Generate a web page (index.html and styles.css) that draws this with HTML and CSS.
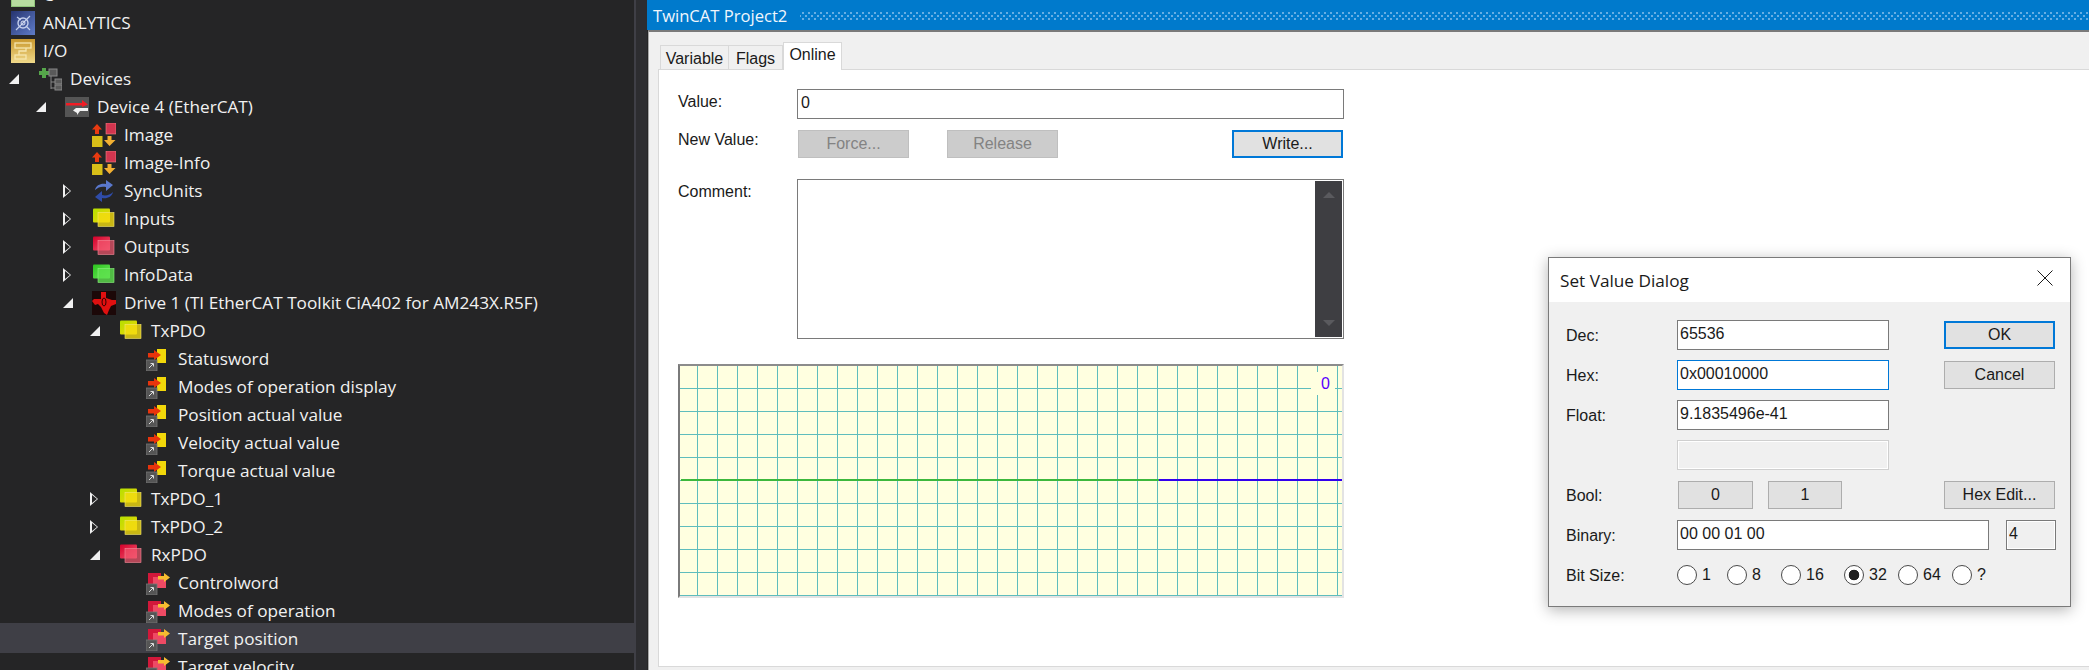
FILE: index.html
```html
<!DOCTYPE html>
<html>
<head>
<meta charset="utf-8">
<title>TwinCAT Project2</title>
<link rel="stylesheet" href="styles.css">
</head>
<body>

<svg class="defs" width="0" height="0">
<defs>
<linearGradient id="blue" x1="0" y1="0" x2="1" y2="1"><stop offset="0" stop-color="#26346f"/><stop offset="1" stop-color="#5f7cc8"/></linearGradient>
<linearGradient id="gold" x1="0" y1="0" x2="0" y2="1"><stop offset="0" stop-color="#c9982e"/><stop offset="1" stop-color="#f0d98a"/></linearGradient>
<linearGradient id="yel" x1="0" y1="0" x2="1" y2="1"><stop offset="0" stop-color="#b4e000"/><stop offset="1" stop-color="#f2d408"/></linearGradient>
<linearGradient id="red" x1="0" y1="0" x2="1" y2="1"><stop offset="0" stop-color="#d4002a"/><stop offset="1" stop-color="#f0566e"/></linearGradient>
<linearGradient id="grn" x1="0" y1="0" x2="1" y2="1"><stop offset="0" stop-color="#2cc41e"/><stop offset="1" stop-color="#6be85c"/></linearGradient>

<symbol id="i-cpp" viewBox="0 0 24 24"><rect x="0" y="0" width="24" height="24" fill="#8fc47a"/><rect x="1" y="1" width="22" height="22" fill="#b7dca0"/></symbol>
<symbol id="i-analytics" viewBox="0 0 24 24">
<rect width="24" height="24" fill="url(#blue)"/>
<circle cx="12" cy="12" r="5" fill="none" stroke="#c4cfec" stroke-width="1.4"/>
<path d="M5 19 L19 5 M6 6 L10 9 M15 15 L19 19" stroke="#c4cfec" stroke-width="1.2" fill="none"/>
<circle cx="12" cy="12" r="2" fill="none" stroke="#dfe5f6"/>
</symbol>
<symbol id="i-io" viewBox="0 0 24 24">
<rect width="24" height="24" fill="url(#gold)"/>
<rect x="4" y="4" width="16" height="5" fill="none" stroke="#f6e6ae" stroke-width="1.3"/>
<path d="M15 9 V12 H8 V16" fill="none" stroke="#f6e6ae" stroke-width="1.3"/>
<rect x="4" y="16" width="11" height="4" fill="none" stroke="#f6e6ae" stroke-width="1.3"/>
</symbol>
<symbol id="i-devices" viewBox="0 0 24 24">
<path d="M1 4 H4 V1 H8 V4 H11 V8 H8 V11 H4 V8 H1 Z" fill="#55a64a"/>
<rect x="11" y="2" width="8" height="7" fill="#5a5a5a" stroke="#888"/>
<path d="M13 9 V22 M13 15 H17 M13 21 H17" stroke="#888" fill="none"/>
<rect x="17" y="12" width="7" height="5" fill="#5a5a5a" stroke="#888"/>
<rect x="17" y="18" width="7" height="5" fill="#5a5a5a" stroke="#888"/>
</symbol>
<symbol id="i-device" viewBox="0 0 24 24">
<rect y="2" width="24" height="20" fill="#555"/>
<path d="M1 8 H17 V5 L23 9.500 L17 12 V10.500 H1 Z" fill="#f01c24"/>
<path d="M23 13 H11 L8 15.500 L12 18 V20 L15 16 H23 Z" fill="#f2f2f2"/>
</symbol>
<symbol id="i-image" viewBox="0 0 24 24">
<rect x="14" y="0" width="10" height="11" fill="#d2354f" stroke="#e88" stroke-width=".6"/>
<path d="M5 1 L10 6.500 H7 V11 H3 V6.500 H0 Z" fill="#e83a10"/>
<rect x="0" y="13" width="10.500" height="11" fill="#d8bf18"/>
<path d="M15.500 13 H19.500 V17 H23.500 L17.500 23 L12 17 H15.500 Z" fill="#f2b032"/>
</symbol>
<symbol id="i-sync" viewBox="0 0 24 24">
<path d="M3 11 C4 6 9 4 14 5 L14 1 L21 6 L14 12 L14 8 C10 7 6 8 3 11 Z" fill="#5a78cc"/>
<path d="M21 13 C20 18 15 20 10 19 L10 23 L3 18 L10 12 L10 16 C14 17 18 16 21 13 Z" fill="#2f4ca8"/>
</symbol>
<symbol id="i-in" viewBox="0 0 24 24"><rect x="1" y="1.500" width="17" height="14" rx="1" fill="url(#yel)"/><rect x="6" y="5.500" width="16" height="14" fill="#f2dc10" fill-opacity=".8" stroke="#f6e870" stroke-width=".6"/></symbol>
<symbol id="i-out" viewBox="0 0 24 24"><rect x="1" y="1.500" width="17" height="14" rx="1" fill="url(#red)"/><rect x="6" y="5.500" width="16" height="14" fill="#f2566e" fill-opacity=".7" stroke="#f58a9a" stroke-width=".6"/></symbol>
<symbol id="i-info" viewBox="0 0 24 24"><rect x="1" y="1.500" width="17" height="14" rx="1" fill="url(#grn)"/><rect x="6" y="5.500" width="16" height="14" fill="#5ce04c" fill-opacity=".8" stroke="#8cf080" stroke-width=".6"/></symbol>
<symbol id="i-ti" viewBox="0 0 24 24">
<rect width="24" height="24" fill="#1c0808"/>
<path d="M9 1 H14 V7 L20 9 L24 9 V13 L19 15 L17 19 L15 24 L12 22 L9 16 L6 13 L3 14 L0 10 L2 8 H9 Z" fill="#e01010"/>
<ellipse cx="12" cy="11" rx="2" ry="4" fill="none" stroke="#300" stroke-width="1"/>
</symbol>
<symbol id="i-tx" viewBox="0 0 24 24">
<rect x="11" y="2" width="9" height="14" fill="#f2d80a"/>
<path d="M2 6 H8 V3 L15 8 L8 13 V10.500 H2 Z" fill="#e8340c"/>
<rect x="0" y="13" width="11" height="11" fill="#555" stroke="#777" stroke-width=".8"/>
<path d="M3 21 L7 17 M4.500 16.500 H7.500 V19.500" stroke="#ddd" fill="none"/>
</symbol>
<symbol id="i-rx" viewBox="0 0 24 24">
<rect x="2" y="2" width="13" height="11" fill="#d2183a"/>
<rect x="7" y="6" width="13" height="11" fill="#ee4a64"/>
<path d="M12 5 H18 V2 L24 6.500 L18 11 V8.500 H12 Z" fill="#f6bc30"/>
<rect x="0" y="13" width="11" height="11" fill="#555" stroke="#777" stroke-width=".8"/>
<path d="M3 21 L7 17 M4.500 16.500 H7.500 V19.500" stroke="#ddd" fill="none"/>
</symbol>
</defs>
</svg>

<div class="tree">
<div class="tree-list">
<div class="row lv0"><svg class="ico"><use href="#i-cpp"/></svg><span>C++</span></div>
<div class="row lv0"><svg class="ico"><use href="#i-analytics"/></svg><span>ANALYTICS</span></div>
<div class="row lv0"><svg class="ico"><use href="#i-io"/></svg><span>I/O</span></div>
<div class="row lv1"><i class="exp open"></i><svg class="ico"><use href="#i-devices"/></svg><span>Devices</span></div>
<div class="row lv2"><i class="exp open"></i><svg class="ico"><use href="#i-device"/></svg><span>Device 4 (EtherCAT)</span></div>
<div class="row lv3"><i class="exp"></i><svg class="ico"><use href="#i-image"/></svg><span>Image</span></div>
<div class="row lv3"><i class="exp"></i><svg class="ico"><use href="#i-image"/></svg><span>Image-Info</span></div>
<div class="row lv3"><i class="exp shut"></i><svg class="ico"><use href="#i-sync"/></svg><span>SyncUnits</span></div>
<div class="row lv3"><i class="exp shut"></i><svg class="ico"><use href="#i-in"/></svg><span>Inputs</span></div>
<div class="row lv3"><i class="exp shut"></i><svg class="ico"><use href="#i-out"/></svg><span>Outputs</span></div>
<div class="row lv3"><i class="exp shut"></i><svg class="ico"><use href="#i-info"/></svg><span>InfoData</span></div>
<div class="row lv3"><i class="exp open"></i><svg class="ico"><use href="#i-ti"/></svg><span>Drive 1 (TI EtherCAT Toolkit CiA402 for AM243X.R5F)</span></div>
<div class="row lv4"><i class="exp open"></i><svg class="ico"><use href="#i-in"/></svg><span>TxPDO</span></div>
<div class="row lv5"><i class="exp"></i><svg class="ico"><use href="#i-tx"/></svg><span>Statusword</span></div>
<div class="row lv5"><i class="exp"></i><svg class="ico"><use href="#i-tx"/></svg><span>Modes of operation display</span></div>
<div class="row lv5"><i class="exp"></i><svg class="ico"><use href="#i-tx"/></svg><span>Position actual value</span></div>
<div class="row lv5"><i class="exp"></i><svg class="ico"><use href="#i-tx"/></svg><span>Velocity actual value</span></div>
<div class="row lv5"><i class="exp"></i><svg class="ico"><use href="#i-tx"/></svg><span>Torque actual value</span></div>
<div class="row lv4"><i class="exp shut"></i><svg class="ico"><use href="#i-in"/></svg><span>TxPDO_1</span></div>
<div class="row lv4"><i class="exp shut"></i><svg class="ico"><use href="#i-in"/></svg><span>TxPDO_2</span></div>
<div class="row lv4"><i class="exp open"></i><svg class="ico"><use href="#i-out"/></svg><span>RxPDO</span></div>
<div class="row lv5"><i class="exp"></i><svg class="ico"><use href="#i-rx"/></svg><span>Controlword</span></div>
<div class="row lv5"><i class="exp"></i><svg class="ico"><use href="#i-rx"/></svg><span>Modes of operation</span></div>
<div class="row lv5 selected"><i class="exp"></i><svg class="ico"><use href="#i-rx"/></svg><span>Target position</span></div>
<div class="row lv5"><i class="exp"></i><svg class="ico"><use href="#i-rx"/></svg><span>Target velocity</span></div>
</div>
</div>

<div class="splitter"></div>

<div class="main">
<div class="titlebar">
<span class="title">TwinCAT Project2</span>
<div class="grip"></div>
</div>

<div class="pane">
<div class="tabs">
<div class="tab tab-variable">Variable</div>
<div class="tab tab-flags">Flags</div>
<div class="tab active">Online</div>
</div>

<div class="tab-body">
<div class="form-row row-value">
<label class="lbl">Value:</label>
<input class="field value-field" type="text" value="0">
</div>
<div class="form-row row-new">
<label class="lbl">New Value:</label>
<div class="btn-row">
<button class="btn off">Force...</button>
<button class="btn off">Release</button>
<button class="btn focus write">Write...</button>
</div>
</div>
<div class="form-row row-comment">
<label class="lbl">Comment:</label>
<div class="comment-box">
<div class="vscroll"><b class="up"></b><b class="down"></b></div>
</div>
</div>
<div class="graph">
<svg class="trace" width="662" height="230">
<line x1="1" y1="114" x2="479" y2="114" stroke="#3cb83c" stroke-width="2"/>
<line x1="479" y1="114" x2="664" y2="114" stroke="#3300ee" stroke-width="2"/>
</svg>
<div class="graph-val">0</div>
</div>
</div>
</div>
</div>

<div class="dialog">
<div class="dlg-title">
<span>Set Value Dialog</span>
<svg class="dlg-close" width="16" height="16"><path d="M0.500 0.500 L15.500 15.500 M15.500 0.500 L0.500 15.500" stroke="#1a1a1a" fill="none"/></svg>
</div>
<div class="dlg-body">
<div class="drow">
<label class="dlbl">Dec:</label>
<input class="dfield" type="text" value="65536">
<button class="btn dbtn focus">OK</button>
</div>
<div class="drow">
<label class="dlbl">Hex:</label>
<input class="dfield hot" type="text" value="0x00010000">
<button class="btn dbtn">Cancel</button>
</div>
<div class="drow">
<label class="dlbl">Float:</label>
<input class="dfield" type="text" value="9.1835496e-41">
</div>
<div class="drow">
<label class="dlbl"></label>
<input class="dfield blank" type="text" disabled>
</div>
<div class="drow">
<label class="dlbl">Bool:</label>
<button class="btn bool bool-0">0</button>
<button class="btn bool bool-1">1</button>
<button class="btn dbtn">Hex Edit...</button>
</div>
<div class="drow">
<label class="dlbl">Binary:</label>
<input class="dfield wide" type="text" value="00 00 01 00">
<input class="dfield size" type="text" value="4" readonly>
</div>
<div class="drow">
<label class="dlbl">Bit Size:</label>
<label class="radio r50"><input type="radio" name="bits">1</label>
<label class="radio r54"><input type="radio" name="bits">8</label>
<label class="radio r63"><input type="radio" name="bits">16</label>
<label class="radio r54"><input type="radio" name="bits" checked>32</label>
<label class="radio r54"><input type="radio" name="bits">64</label>
<label class="radio"><input type="radio" name="bits">?</label>
</div>
</div>
</div>

</body>
</html>
```

FILE: styles.css
```css
html, body {
  margin: 0;
  height: 670px;
  overflow: hidden;
}
body {
  display: flex;
  background: #252526;
  font-family: "Liberation Sans", Arial, sans-serif;
  font-size: 16px;
  color: #1a1a1a;
}
.defs {
  position: absolute;
}

/* solution tree */
.tree {
  width: 634px;
  flex: none;
  overflow: hidden;
  color: #f1f1f1;
  font-family: "Open Sans", sans-serif;
  font-size: 17.200px;
}
.tree-list {
  margin-top: -19px;
}
.row {
  display: flex;
  align-items: center;
  height: 28px;
  white-space: nowrap;
}
.row span {
  margin: 0 0 2px 8px;
}
.ico {
  width: 24px;
  height: 24px;
  flex: none;
}
.lv0 { padding-left: 11px; }
.lv1 { padding-left: 9px; }
.lv2 { padding-left: 36px; }
.lv3 { padding-left: 63px; }
.lv4 { padding-left: 90px; }
.lv5 { padding-left: 117px; }
.selected {
  height: 30px;
  box-sizing: border-box;
  padding-top: 2px;
  margin: -2px 0 0;
  background: #3f3f46;
}
.exp {
  width: 29px;
  height: 14px;
  flex: none;
  position: relative;
}
.exp.open::before {
  content: "";
  position: absolute;
  left: 0;
  top: 2px;
  border-style: solid;
  border-width: 0 0 10px 10px;
  border-color: transparent transparent #f1f1f1 transparent;
}
.exp.shut::before {
  content: "";
  position: absolute;
  left: 0;
  top: 0;
  border-style: solid;
  border-width: 7px 0 7px 8px;
  border-color: transparent transparent transparent #f1f1f1;
}
.exp.shut::after {
  content: "";
  position: absolute;
  left: 1.500px;
  top: 2.500px;
  border-style: solid;
  border-width: 4.500px 0 4.500px 5px;
  border-color: transparent transparent transparent #252526;
}

.splitter {
  width: 13px;
  box-sizing: border-box;
  flex: none;
  background: #2d2d30;
  border-left: 2px solid #3f3f46;
}
.main {
  flex: 1;
  display: flex;
  flex-direction: column;
  min-width: 0;
}

/* title bar */
.titlebar {
  height: 30px;
  flex: none;
  display: flex;
  align-items: center;
  padding-left: 6px;
  background: #007acc;
}
.title {
  color: #f0f6fc;
  font-family: "Open Sans", sans-serif;
  font-size: 16.600px;
  white-space: nowrap;
}
.grip {
  flex: 1;
  height: 9px;
  margin-left: 13px;
  background-image:
    radial-gradient(circle, #66aee4 1px, transparent 1.300px),
    radial-gradient(circle, #66aee4 1px, transparent 1.300px);
  background-size: 6px 6px;
  background-position: 0 -1px, 3px 2px;
}

/* pane with tabs */
.pane {
  flex: 1;
  display: flex;
  flex-direction: column;
  margin-left: 1px;
  background: #f0f0f0;
  border-top: 2px solid #7a7a7a;
  border-left: 1px solid #a8a8a8;
  padding: 10px 0 3px 9px;
  min-height: 0;
}
.tabs {
  display: flex;
  align-items: flex-end;
  height: 28px;
  flex: none;
  margin-bottom: -1px;
  padding-left: 2px;
}
.tab {
  height: 25px;
  line-height: 25px;
  text-align: center;
  border: 1px solid #d9d9d9;
  border-bottom: 0;
  box-sizing: border-box;
}
.tab-variable {
  width: 69px;
}
.tab-flags {
  width: 54px;
  border-left: 0;
}
.tab.active {
  width: 59px;
  height: 28px;
  line-height: 24px;
  background: #fff;
  position: relative;
  z-index: 1;
}
.tab-body {
  flex: 1;
  background: #fff;
  border: 1px solid #d9d9d9;
  border-right: 0;
  padding: 19px 0 0 19px;
}

/* form */
.form-row {
  display: flex;
}
.row-value {
  height: 30px;
  margin-bottom: 11px;
}
.row-new {
  height: 28px;
  margin-bottom: 21px;
}
.row-comment {
  height: 160px;
  margin-bottom: 25px;
}
.lbl {
  width: 119px;
  flex: none;
}
.row-value .lbl {
  line-height: 26px;
}
.row-new .lbl {
  line-height: 19px;
}
.row-comment .lbl {
  line-height: 25px;
}
.field {
  width: 547px;
  box-sizing: border-box;
  height: 30px;
  border: 1px solid #7a7a7a;
  padding: 0 3px 3px;
  font: inherit;
  color: #1a1a1a;
  outline: none;
}
.btn-row {
  display: flex;
  width: 545px;
  margin-left: 1px;
  gap: 38px;
}
.btn {
  box-sizing: border-box;
  width: 111px;
  height: 28px;
  padding: 0;
  background: #e1e1e1;
  border: 1px solid #adadad;
  font: inherit;
  color: #1a1a1a;
}
.btn.off {
  background: #ccc;
  border-color: #bfbfbf;
  color: #838383;
}
.btn.focus {
  border: 2px solid #0078d7;
}
.write {
  margin-left: auto;
}
.comment-box {
  width: 547px;
  box-sizing: border-box;
  border: 1px solid #7a7a7a;
  padding: 1px;
  display: flex;
  justify-content: flex-end;
}
.vscroll {
  width: 27px;
  background: #3e3e42;
  display: flex;
  flex-direction: column;
  justify-content: space-between;
  align-items: center;
  padding: 11px 0;
}
.up, .down {
  width: 0;
  height: 0;
  border-left: 6px solid transparent;
  border-right: 6px solid transparent;
}
.up {
  border-bottom: 6px solid #5a5a5e;
}
.down {
  border-top: 6px solid #5a5a5e;
}

/* graph */
.graph {
  position: relative;
  width: 666px;
  height: 234px;
  box-sizing: border-box;
  border-top: 2px solid #8c8c8c;
  border-left: 2px solid #7a7a7a;
  border-right: 2px solid #e3e3e3;
  border-bottom: 2px solid #e3e3e3;
  background-color: #ffffe0;
  background-image:
    linear-gradient(to right, #5fbdbd 1px, transparent 1px),
    linear-gradient(to bottom, #5fbdbd 1px, transparent 1px);
  background-size: 20px 23px;
  background-position: 17px 0, 0 22px;
}
.trace {
  position: absolute;
  left: 0;
  top: 0;
}
.graph-val {
  position: absolute;
  left: 631px;
  top: 6px;
  width: 24px;
  height: 23px;
  box-sizing: border-box;
  padding-left: 10px;
  line-height: 24px;
  background: #ffffe0;
  color: #5a00ff;
}

/* floating dialog */
.dialog {
  position: absolute;
  left: 1548px;
  top: 257px;
  width: 523px;
  height: 350px;
  box-sizing: border-box;
  border: 1px solid #7a7a7a;
  background: #f0f0f0;
  box-shadow: 0 3px 14px rgba(0, 0, 0, .3);
}
.dlg-title {
  height: 44px;
  box-sizing: border-box;
  padding: 0 17px 0 11px;
  display: flex;
  align-items: center;
  justify-content: space-between;
  background: #fff;
  font-family: "Open Sans", sans-serif;
  font-size: 17.200px;
}
.dlg-close {
  margin-top: -4px;
}
.dlg-body {
  padding: 18px 0 0 17px;
}
.drow {
  display: flex;
  align-items: center;
  height: 30px;
  margin-bottom: 10px;
}
.dlbl {
  width: 111px;
  flex: none;
  padding-top: 2px;
}
.dfield {
  width: 212px;
  height: 30px;
  box-sizing: border-box;
  border: 1px solid #7a7a7a;
  padding: 0 2px 3px;
  font: inherit;
  color: #1a1a1a;
  background: #fff;
  outline: none;
}
.dfield.hot {
  border-color: #0078d7;
}
.dfield.blank {
  background: #f0f0f0;
  border: 1px solid #cfcfcf;
  box-shadow: inset 0 0 0 1px #fff;
}
.dfield.wide {
  width: 312px;
}
.dfield.size {
  width: 50px;
  margin-left: 17px;
  background: #f0f0f0;
  box-shadow: inset 0 0 0 1px #fff;
}
.dbtn {
  position: absolute;
  left: 395px;
}
.bool {
  height: 28px;
  width: 75px;
}
.bool-0 {
  margin-left: 1px;
}
.bool-1 {
  width: 74px;
  margin-left: 15px;
}
.radio {
  display: flex;
  align-items: center;
  flex: none;
}
.radio input {
  appearance: none;
  width: 20px;
  height: 20px;
  margin: 0 5px 0 0;
  border: 1px solid #4a4a4a;
  border-radius: 50%;
  background: #fff;
}
.radio input:checked {
  background: radial-gradient(circle, #1f1f1f 5px, #fff 5.600px);
}
.r50 { width: 50px; }
.r54 { width: 54px; }
.r63 { width: 63px; }
```
